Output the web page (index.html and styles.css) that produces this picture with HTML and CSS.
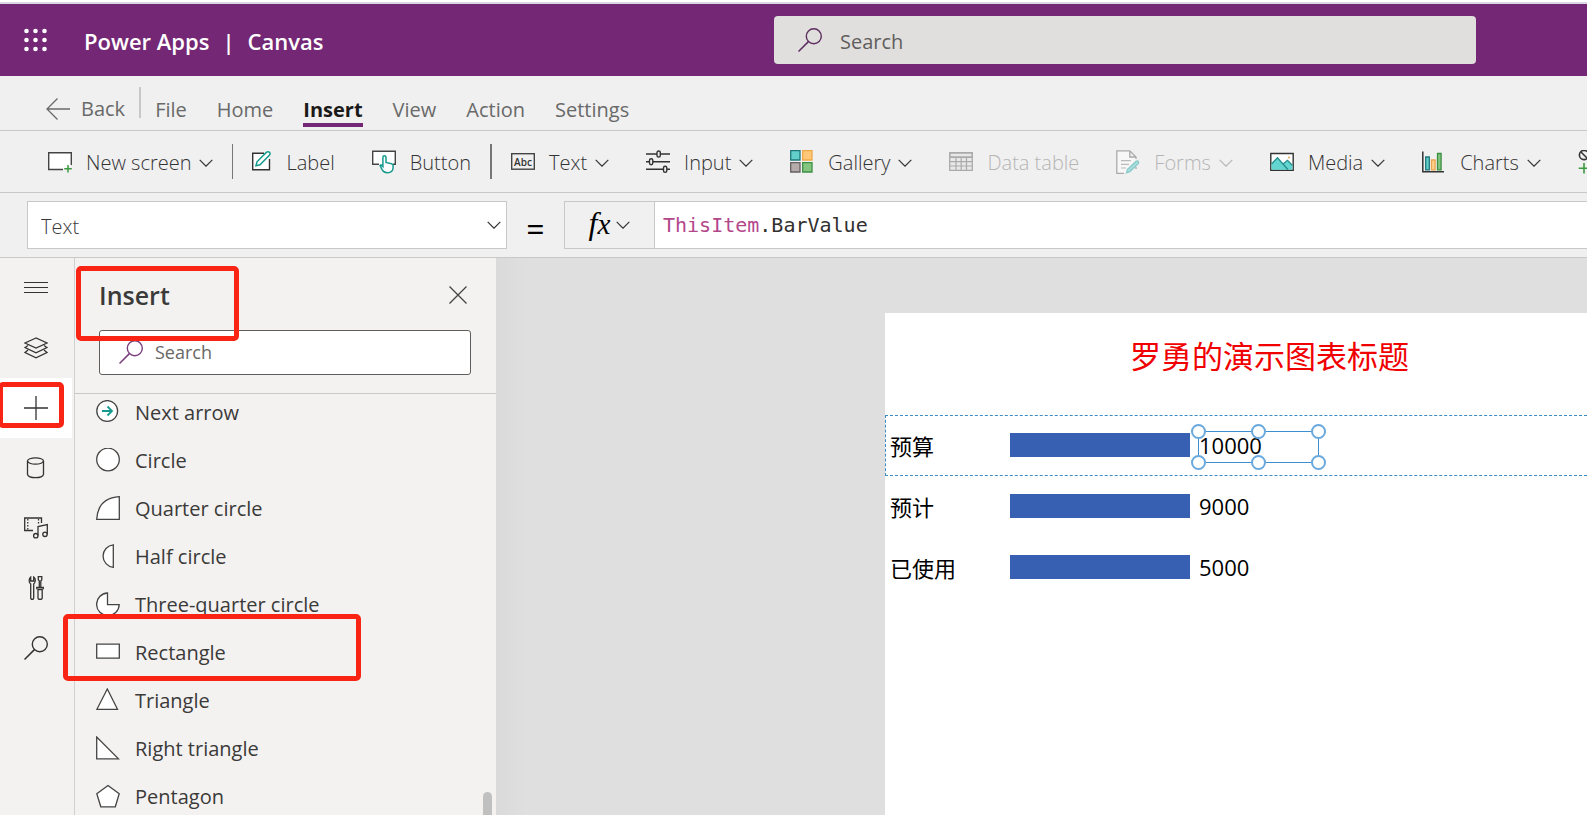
FILE: index.html
```html
<!DOCTYPE html>
<html lang="en">
<head>
<meta charset="utf-8">
<title>Power Apps | Canvas</title>
<link rel="stylesheet" href="styles.css">
</head>
<body>
<svg class="defs" aria-hidden="true">
  <symbol id="chevron" viewBox="0 0 14 8"><path d="M.7.9 7 7.2 13.3.9" fill="none" stroke="currentColor" stroke-width="1.2"/></symbol>
  <symbol id="magnifier" viewBox="0 0 24 24"><circle cx="15.800" cy="8.200" r="7.500" fill="none" stroke="currentColor" stroke-width="1.4"/><path d="M10.400 13.600.5 23.500" fill="none" stroke="currentColor" stroke-width="1.500"/></symbol>
</svg>

<header class="topbar">
  <div class="brand">
    <button class="waffle" aria-label="App launcher">
      <svg width="24" height="24" viewBox="0 0 24 24" fill="#fff"><circle cx="2.500" cy="3" r="2.300"/><circle cx="11.500" cy="3" r="2.300"/><circle cx="20.500" cy="3" r="2.300"/><circle cx="2.500" cy="12" r="2.300"/><circle cx="11.500" cy="12" r="2.300"/><circle cx="20.500" cy="12" r="2.300"/><circle cx="2.500" cy="21" r="2.300"/><circle cx="11.500" cy="21" r="2.300"/><circle cx="20.500" cy="21" r="2.300"/></svg>
    </button>
    <h1 class="brand-title"><span>Power Apps</span><span>|</span><span>Canvas</span></h1>
  </div>
  <label class="top-search">
    <svg class="icon"><use href="#magnifier"/></svg>
    <input type="search" placeholder="Search" aria-label="Search">
  </label>
</header>

<nav class="menu">
  <a class="back" href="#"><svg class="icon" viewBox="0 0 24 24"><path d="M24 12H1M11.500 1.500 1 12l10.500 10.500" fill="none" stroke="#696969" stroke-width="1.300"/></svg>Back</a>
  <span class="menu-divider"></span>
  <a href="#">File</a>
  <a href="#">Home</a>
  <a href="#" class="active" aria-current="page">Insert</a>
  <a href="#">View</a>
  <a href="#">Action</a>
  <a href="#">Settings</a>
</nav>

<div class="toolbar">
  <button class="tool"><svg class="icon" viewBox="0 0 24 24"><path d="M15 19.500H.7V2.700h22.600V15" fill="#fff" stroke="#444" stroke-width="1.400"/><path d="M20 15v7.500M16.300 18.800h7.500" stroke="#3c9a40" stroke-width="1.500"/></svg><span>New screen</span><svg class="chev"><use href="#chevron"/></svg></button>
  <span class="rule"></span>
  <button class="tool"><svg class="icon icon-narrow" viewBox="0 0 20 24"><path d="M12 3.200H.7v16.600h16.800V9" fill="#fff" stroke="#333" stroke-width="1.400"/><path d="m4 15.800 1-4L14.600 2.200q1.600-1.100 2.900.1 1.300 1.300.1 2.800L8 14.800z" fill="#fff" stroke="#159b8d" stroke-width="1.500"/></svg><span>Label</span></button>
  <button class="tool"><svg class="icon" viewBox="0 0 24 24"><path d="M7 14.300H.7V1.300h22.600v13H21" fill="#fff" stroke="#444" stroke-width="1.400"/><path d="M10.900 16.500V7.200q0-1.500 1.500-1.500T14 7.200v5.300l5.500 1.200q1.600.4 1.600 2v1.800q0 5-5.600 5.300-3.600.1-5.400-3.200l-2-4q.8-1.500 2.800.9z" fill="#fff" stroke="#159b8d" stroke-width="1.500"/></svg><span>Button</span></button>
  <span class="rule rule-thick"></span>
  <button class="tool"><svg class="icon" viewBox="0 0 24 24"><rect x=".7" y="3.700" width="22.600" height="15.500" fill="none" stroke="#444" stroke-width="1.400"/><text x="12" y="15.500" class="abc">Abc</text></svg><span>Text</span><svg class="chev"><use href="#chevron"/></svg></button>
  <button class="tool"><svg class="icon" viewBox="0 0 24 24" fill="#f0f0f0" stroke="#333" stroke-width="1.400"><path d="M0 4h24M0 11.700h24M0 19.300h24"/><rect x="11" y="1" width="3.300" height="6" rx="1.600"/><rect x="3.500" y="8.700" width="3.300" height="6" rx="1.600"/><rect x="17.500" y="16.300" width="3.300" height="6" rx="1.600"/></svg><span>Input</span><svg class="chev"><use href="#chevron"/></svg></button>
  <button class="tool"><svg class="icon" viewBox="0 0 24 24"><path d="M.7.7H10V10H.7z" fill="#62cfca" stroke="#20777b" stroke-width="1.300"/><path d="M12.700.7H22V10h-9.300z" fill="#ffc879" stroke="#eca847" stroke-width="1.300"/><path d="M.7 12.700H10V22H.7z" fill="#b4abaa" stroke="#655f60" stroke-width="1.300"/><path d="M12.700 12.700H22V22h-9.300z" fill="#84c67f" stroke="#3c8e43" stroke-width="1.300"/></svg><span>Gallery</span><svg class="chev"><use href="#chevron"/></svg></button>
  <button class="tool" disabled><svg class="icon" viewBox="0 0 24 24"><path d="M.7 2.700h22.600v17.600H.7zM1 3h22v4H1z" fill="#e8e8e8" stroke="#aaa" stroke-width="1.300"/><path d="M1 7.500h22M1 11.700h22M1 16h22M7 7.500V20M12.200 7.500V20M17.500 7.500V20" fill="none" stroke="#aaa" stroke-width="1.200"/></svg><span>Data table</span></button>
  <button class="tool" disabled><svg class="icon" viewBox="0 0 24 24"><path d="M8 23.500H.8V.8h13L20 7v2M13.800.8V7H20M20 17v2" fill="#f7f7f7" stroke="#aaa" stroke-width="1.300"/><path d="M5 10.700h10M5 14.300h8M5 18h5" stroke="#bbb" stroke-width="1.200"/><path d="m10.500 22.800 1-3.500 8.600-8q1.400-.8 2.300.2.800 1.100-.1 2.200l-8.500 8z" fill="#a5dcdc" stroke="#88c9c9" stroke-width="1.200"/></svg><span>Forms</span><svg class="chev"><use href="#chevron"/></svg></button>
  <button class="tool"><svg class="icon" viewBox="0 0 24 24"><path d="M.8 3.500h22.400v16.800H.8z" fill="#fff" stroke="#333" stroke-width="1.400"/><path d="m1.500 14 6-6.300L13 14l4.500-3.700 5 5.200v4.300h-21z" fill="#62d5d0"/><path d="m1.500 14 6-6.300 10.500 12M13 14l4.500-3.700 5 5.200" fill="none" stroke="#278e8e" stroke-width="1.300"/><circle cx="19" cy="7.500" r="1" fill="#eba54e"/></svg><span>Media</span><svg class="chev"><use href="#chevron"/></svg></button>
  <button class="tool"><svg class="icon" viewBox="0 0 24 24"><path d="M.8 1.500v20.300H22" fill="none" stroke="#333" stroke-width="1.500"/><path d="M3.700 7h3.600v12.800H3.700z" fill="#62cfca" stroke="#20777b" stroke-width="1.300"/><path d="M9.500 10h3.600v9.800H9.500z" fill="#ffd08a" stroke="#eba54e" stroke-width="1.300"/><path d="M15.500 3.500h3.600v16.300h-3.600z" fill="#84c67f" stroke="#3c8e43" stroke-width="1.300"/></svg><span>Charts</span><svg class="chev"><use href="#chevron"/></svg></button>
  <button class="tool" aria-label="Icons"><svg class="icon" viewBox="0 0 24 24"><circle cx="6" cy="5" r="4.600" fill="none" stroke="#333" stroke-width="1.600"/><path d="m3 2 6 6" stroke="#333" stroke-width="1.500"/><path d="M6 13v10.500M.7 18.300h10.600" stroke="#3c9a40" stroke-width="1.600"/></svg></button>
</div>

<div class="formula-row">
  <div class="property">
    <select aria-label="Property"><option>Text</option></select>
    <svg class="chev"><use href="#chevron"/></svg>
  </div>
  <span class="equals">=</span>
  <div class="formula">
    <button class="fx" aria-label="Function"><span class="fx-sign"><span class="fx-f">f</span>x</span><svg class="chev"><use href="#chevron"/></svg></button>
    <div class="formula-text" role="textbox" aria-label="Formula" contenteditable="true" spellcheck="false"><span class="token">ThisItem</span>.BarValue</div>
  </div>
</div>

<main class="workspace">
  <nav class="rail" aria-label="Tools">
    <button aria-label="Menu"><svg class="icon" viewBox="0 0 24 24"><path d="M0 6.500h24M0 11.500h24M0 16.500h24" stroke="#333" stroke-width="1.200"/></svg></button>
    <button aria-label="Tree view"><svg class="icon" viewBox="0 0 24 24" fill="#f3f2f1" stroke="#333" stroke-width="1.300"><path d="m4 14-3 2.500 11 5.300 11-5.300-3-2.500"/><path d="m4 9.500-3 2 11 5.300 11-5.300-3-2"/><path d="M12 2 1 7l11 5 11-5z"/></svg></button>
    <button class="current" aria-label="Insert"><svg class="icon" viewBox="0 0 24 24"><path d="M0 12h24M12 0v24" stroke="#333" stroke-width="1.300"/></svg></button>
    <button aria-label="Data"><svg class="icon" viewBox="0 0 24 24" fill="none" stroke="#333" stroke-width="1.300"><ellipse cx="11.500" cy="5" rx="8" ry="3.200"/><path d="M3.500 5v13.500q1 3.100 8 3.200 7-.1 8-3.200V5"/></svg></button>
    <button aria-label="Media"><svg class="icon" viewBox="0 0 24 24" fill="none" stroke="#333" stroke-width="1.300"><path d="M9 14.500H.7V2h16.800v5"/><path d="M3.800 3v11M14.500 3v5" stroke-dasharray="1.500 1.500"/><path d="M14 19.500v-9l9.300-2v9.700"/><circle cx="11.800" cy="19.700" r="2.200"/><circle cx="21" cy="18.300" r="2.200"/></svg></button>
    <button aria-label="Advanced tools"><svg class="icon" viewBox="0 0 24 24" fill="none" stroke="#333" stroke-width="1.300"><path d="M6.700 1v4h3V1q2 1.300 1.500 4-.3 2.200-1.500 3v14q-.4 1.500-1.500 1.500T6.700 22V8Q5.300 7.200 5.200 5 5 2.300 6.700 1z"/><path d="M14.300.7h3.500v3l-1 1.300v6.500h-1.500V5l-1-1.300zM12.800 13.300v-1.800h6.500v1.800M14 13.500h4.200V22q-.4 1.500-2.100 1.500T14 22z"/></svg></button>
    <button aria-label="Search"><svg class="icon"><use href="#magnifier"/></svg></button>
  </nav>

  <aside class="panel">
    <div class="panel-head">
      <h2>Insert</h2>
      <button class="close" aria-label="Close"><svg width="18" height="18" viewBox="0 0 18 18"><path d="m.5.5 17 17M17.500.5l-17 17" stroke="#444" stroke-width="1.300"/></svg></button>
    </div>
    <label class="panel-search">
      <svg class="icon"><use href="#magnifier"/></svg>
      <input type="search" placeholder="Search" aria-label="Search controls">
    </label>
    <div class="list-wrap">
      <ul class="shape-list">
        <li><button><svg class="icon shape" viewBox="0 0 24 24"><circle cx="11.200" cy="11" r="10.400"/><path class="teal" d="M6 11h10M11.500 6.500 16 11l-4.500 4.500"/></svg>Next arrow</button></li>
        <li><button><svg class="icon shape" viewBox="0 0 24 24"><circle cx="12" cy="11.500" r="11.300"/></svg>Circle</button></li>
        <li><button><svg class="icon shape" viewBox="0 0 24 24"><path d="M.7 23.300h22.600V.7Q2 2 .7 23.300z"/></svg>Quarter circle</button></li>
        <li><button><svg class="icon shape" viewBox="0 0 24 24"><path d="M17.300.8v22.500a11.300 11.300 0 0 1 0-22.500z"/></svg>Half circle</button></li>
        <li><button><svg class="icon shape" viewBox="0 0 24 24"><path d="M11.500 1v11.700h11.700A11.300 11.300 0 1 1 11.500 1z"/></svg>Three-quarter circle</button></li>
        <li><button><svg class="icon shape" viewBox="0 0 24 24"><path d="M.7 4.200h22.600v14H.7z"/></svg>Rectangle</button></li>
        <li><button><svg class="icon shape" viewBox="0 0 24 24"><path d="M11.300 1 21.500 21.300H.9z"/></svg>Triangle</button></li>
        <li><button><svg class="icon shape" viewBox="0 0 24 24"><path d="M.7 1v21.800h21.800z"/></svg>Right triangle</button></li>
        <li><button><svg class="icon shape" viewBox="0 0 24 24"><path d="m12 1.500 11.200 8.300-3.900 13H4.800L.8 9.800z"/></svg>Pentagon</button></li>
      </ul>
      <span class="thumb"></span>
    </div>
  </aside>

  <section class="stage">
    <div class="screen">
      <h3 lang="zh-CN">罗勇的演示图表标题</h3>
      <div class="gallery">
        <div class="row row-selected"><span class="name" lang="zh-CN">预算</span><span class="bar"></span><span class="value">10000
          <span class="selection"><i class="h tl"></i><i class="h tc"></i><i class="h tr"></i><i class="h bl"></i><i class="h bc"></i><i class="h br"></i></span></span></div>
        <div class="row"><span class="name" lang="zh-CN">预计</span><span class="bar"></span><span class="value">9000</span></div>
        <div class="row"><span class="name" lang="zh-CN">已使用</span><span class="bar"></span><span class="value">5000</span></div>
      </div>
    </div>
  </section>
</main>

<div class="mark mark-title"></div>
<div class="mark mark-plus"></div>
<div class="mark mark-rectangle"></div>
</body>
</html>
```
FILE: styles.css
```css
* { box-sizing: border-box; }

body {
  margin: 0;
  height: 100vh;
  display: flex;
  flex-direction: column;
  overflow: hidden;
  position: relative;
  background: #f0f0f0;
  font-family: "Open Sans", "Noto Sans", "Noto Sans CJK SC", sans-serif;
  font-size: 20px;
  color: #3b3a39;
}

.defs { display: none; }
button, input, select { font: inherit; color: inherit; }
button { border: 0; padding: 0; background: none; }
input { border: 0; outline: 0; padding: 0; background: none; min-width: 0; flex: 1; }
a { color: inherit; text-decoration: none; }
h1, h2, h3, ul { margin: 0; padding: 0; font-weight: 600; }

.icon { width: 24px; height: 24px; flex: none; }
.icon-narrow { width: 20px; }
.chev { width: 14px; height: 8px; flex: none; color: #333; }

/* Top bar */
.topbar {
  flex: none;
  display: flex;
  align-items: center;
  height: 76px;
  padding: 4px 7% 0 24px;
  background: linear-gradient(#fff 2px, #dcd6e2 2px 4px, #742774 4px);
}
.brand { display: flex; align-items: center; gap: 36px; flex: 750; }
.waffle { display: flex; }
.brand-title { display: flex; gap: 13px; padding-top: 2px; font-size: 22px; line-height: 30px; color: #fff; }
.top-search {
  flex: 654;
  display: flex;
  align-items: center;
  gap: 18px;
  height: 48px;
  padding: 0 24px;
  border-radius: 4px;
  background: #e1dfdd;
  color: #5c2d5f;
}
.top-search input { padding-top: 2px; }
.top-search input::placeholder { color: #605e5c; opacity: 1; }

/* Menu */
.menu {
  flex: none;
  display: flex;
  gap: 30px;
  height: 55px;
  padding: 11px 46px 0;
  border-bottom: 1px solid #c8c8c8;
  color: #696969;
}
.menu a { height: 40px; line-height: 46px; }
.menu .back { display: flex; align-items: center; gap: 11px; height: 44px; }
.menu-divider { width: 2px; height: 31px; margin: 0 -16px; background: #c8c8c8; }
.menu .active { font-weight: 700; color: #1b1a19; border-bottom: 4px solid #742774; }

/* Toolbar */
.toolbar {
  flex: none;
  display: flex;
  align-items: center;
  gap: 37px;
  height: 62px;
  padding-left: 48px;
  overflow: hidden;
  border-bottom: 1px solid #c8c8c8;
  font-weight: 300;
}
.tool { display: flex; align-items: center; gap: 14px; flex: none; white-space: nowrap; color: #333; }
.tool span { padding-top: 2px; }
.tool .chev { margin: 2px 0 0 -6px; }
.tool:disabled { color: #b5b5b5; }
.tool:disabled .chev { color: #b5b5b5; }
.rule { width: 1px; height: 35px; margin: 0 -18px; background: #777; flex: none; }
.rule-thick { width: 2px; }
.abc { font-size: 10px; font-weight: 600; text-anchor: middle; fill: #333; }

/* Formula row */
.formula-row {
  flex: none;
  display: flex;
  align-items: center;
  height: 65px;
  padding-left: 27px;
  border-bottom: 1px solid #c8c8c8;
}
.property {
  display: flex;
  align-items: center;
  width: 480px;
  height: 48px;
  padding: 0 5px 0 13px;
  border: 1px solid #c8c8c8;
  background: #fff;
}
.property select { flex: 1; appearance: none; border: 0; padding: 2px 0 0; background: none; font-weight: 300; }
.equals { width: 57px; padding: 8px 0 0; text-align: center; font-size: 32px; line-height: 40px; font-weight: 400; color: #000; }
.formula { flex: 1; display: flex; height: 48px; border: 1px solid #c8c8c8; border-right: 0; background: #fff; }
.fx {
  display: flex;
  align-items: center;
  justify-content: center;
  gap: 6px;
  width: 90px;
  background: #f0f0f0;
  border-right: 1px solid #c8c8c8;
}
.fx-sign { padding-bottom: 4px; font: italic 29px/30px "Liberation Serif", serif; color: #000; }
.fx-f { font-size: 32px; }
.formula-text { flex: 1; padding-left: 8px; line-height: 46px; font-family: "DejaVu Sans Mono", monospace; color: #323130; }
.token { color: #b3478b; }

/* Workspace */
.workspace { flex: 1; display: flex; min-height: 0; }

.rail { flex: none; width: 75px; display: flex; flex-direction: column; background: #f3f2f1; border-right: 1px solid #d2d0ce; }
.rail button { display: flex; align-items: center; justify-content: center; width: 72px; height: 60px; flex: none; color: #333; }
.rail .current { background: #fff; }

.panel { flex: none; width: 421px; display: flex; flex-direction: column; background: #f3f2f1; }
.panel-head { display: flex; align-items: center; justify-content: space-between; height: 72px; padding: 1px 29px 0 24px; }
.panel-head h2 { font-size: 25px; line-height: 32px; }
.close { display: flex; }
.panel-search {
  display: flex;
  align-items: center;
  gap: 12px;
  height: 45px;
  margin: 0 25px 18px 24px;
  padding: 0 19px 2px;
  border: 1px solid #605e5c;
  border-radius: 3px;
  background: #fff;
  color: #7a3f7c;
  font-size: 18px;
}
.panel-search input::placeholder { color: #696765; opacity: 1; }
.list-wrap { position: relative; flex: 1; min-height: 0; overflow: hidden; border-top: 1px solid #c8c8c8; }
.shape-list { display: flex; flex-direction: column; gap: 12px; list-style: none; font-weight: 400; }
.shape-list button { display: flex; align-items: center; gap: 15px; height: 36px; padding-left: 21px; white-space: nowrap; }
.shape { fill: #fff; stroke: #444; stroke-width: 1.3; }
.shape .teal { fill: none; stroke: #159b8d; stroke-width: 1.8; }
.thumb { position: absolute; right: 4px; bottom: 0; width: 9px; height: 23px; border-radius: 5px 5px 0 0; background: #c0c0c0; }

/* Canvas */
.stage { flex: 1; min-width: 0; padding: 55px 0 0 389px; overflow: hidden; background: linear-gradient(90deg, #dadada, #dfdfdf 30px); }
.screen { height: 100%; background: #fff; }
.screen h3 {
  padding: 20px 0 36px 245px;
  font-size: 31px;
  line-height: 46px;
  font-weight: 400;
  white-space: nowrap;
  color: #f00000;
}
.row { display: flex; align-items: center; height: 61px; padding: 0 0 2px 5px; font-size: 22px; color: #000; }
.row-selected { border: 1px dashed #3d8bc4; border-right: 0; padding: 0 0 2px 4px; }
.name { width: 120px; font-weight: 400; }
.bar { width: 180px; height: 24px; background: #3860b2; }
.value { position: relative; margin-left: 9px; }
.selection { position: absolute; left: -1px; top: 1px; width: 121px; height: 32px; border: 1px solid #3d8fd0; }
.h { position: absolute; width: 15px; height: 15px; border: 2px solid #6aa9dd; border-radius: 50%; background: #fff; }
.tl, .tc, .tr { top: -8px; }
.bl, .bc, .br { bottom: -8px; }
.tl, .bl { left: -8px; }
.tc, .bc { left: 52px; }
.tr, .br { right: -8px; }

/* Red callouts over the page */
.mark { position: absolute; border: 5px solid #f92414; border-radius: 5px; pointer-events: none; }
.mark-title { left: 76px; top: 266px; width: 163px; height: 75px; }
.mark-plus { left: -2px; top: 382px; width: 66px; height: 46px; }
.mark-rectangle { left: 63px; top: 614px; width: 298px; height: 67px; }
```
